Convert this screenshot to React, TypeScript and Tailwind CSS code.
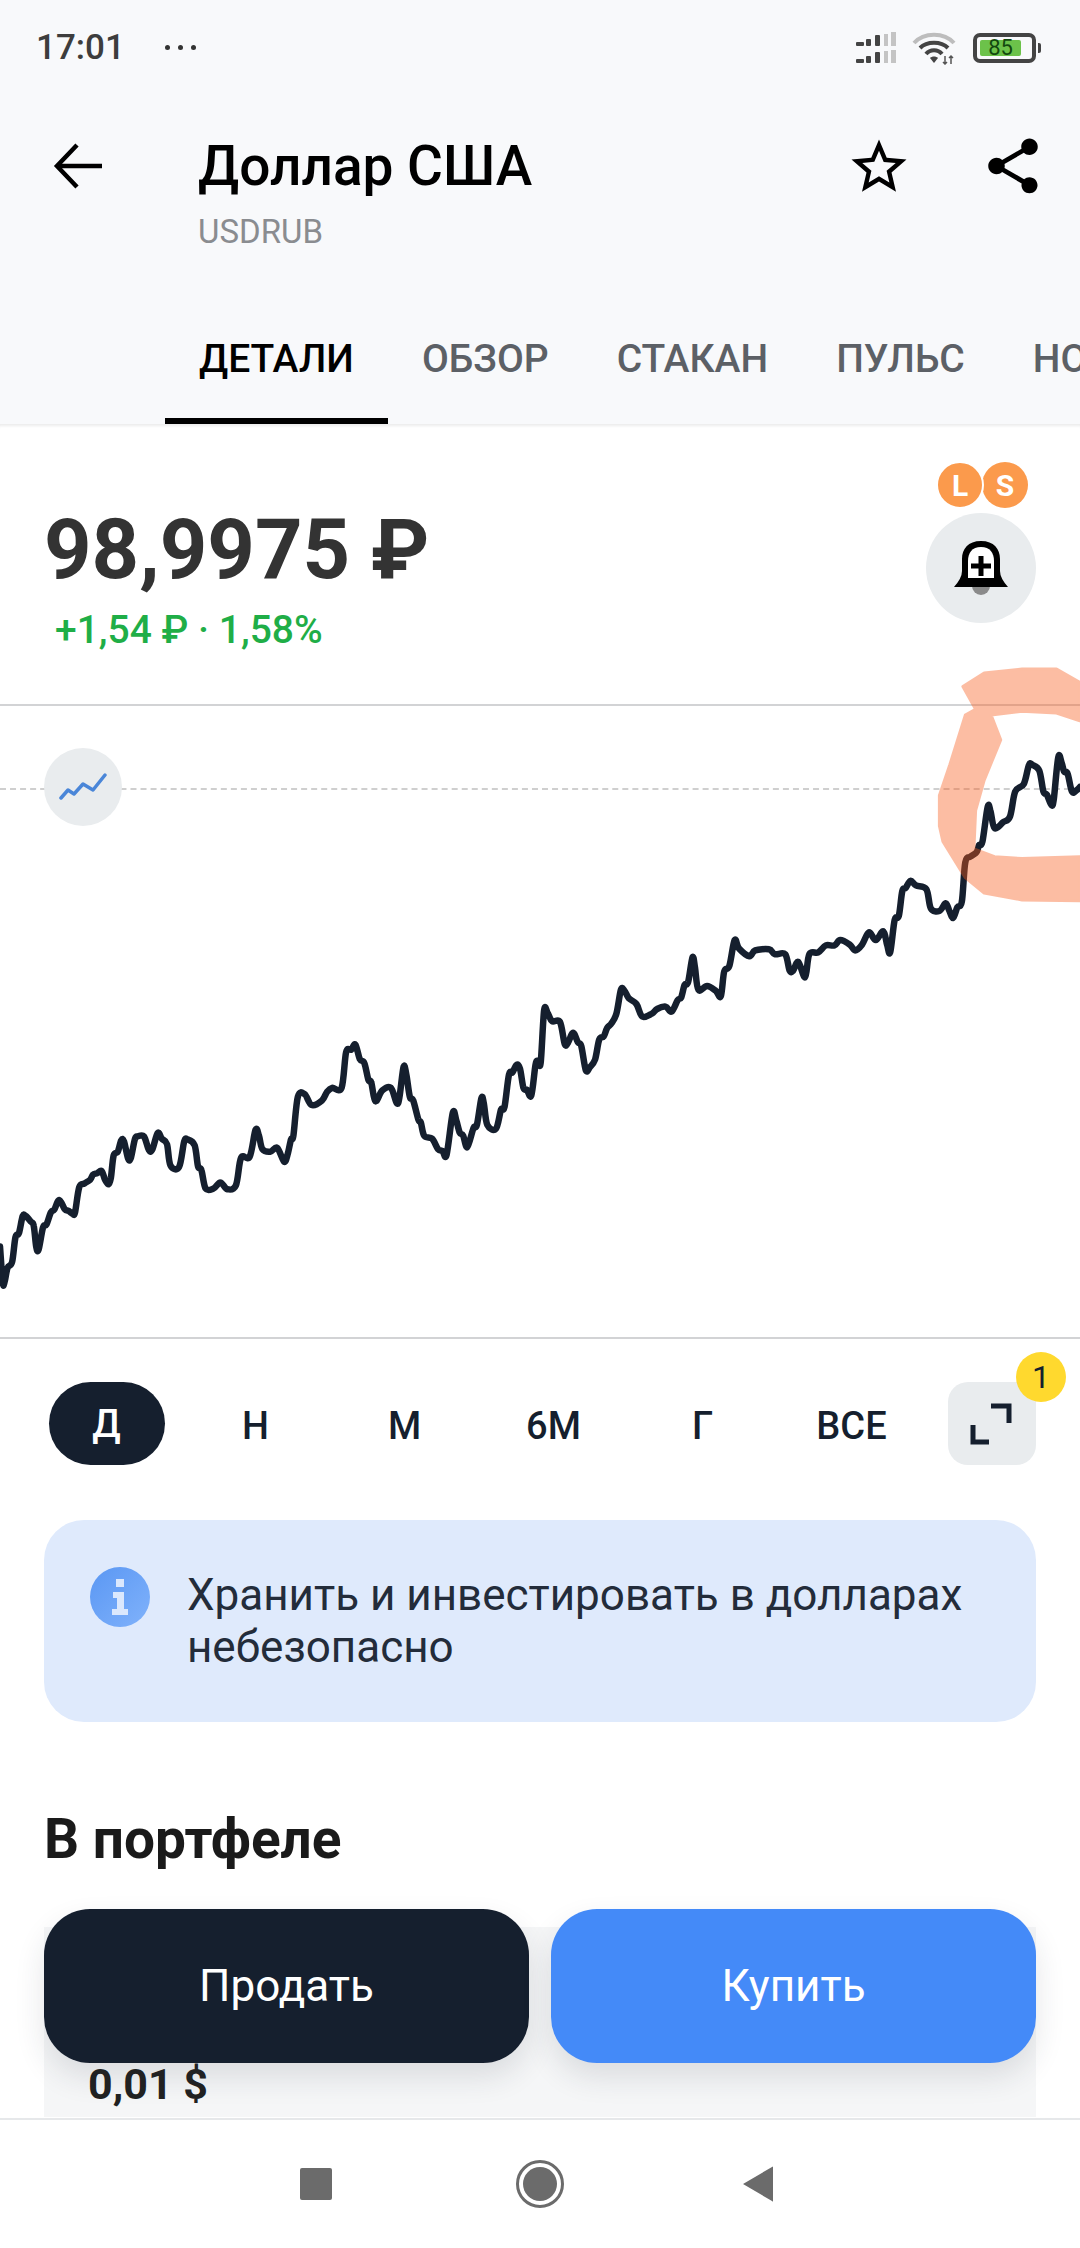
const firstHalf = [
  [0, 1350], [8, 1445], [14, 1440], [22, 1405], [35, 1390], [45, 1325], [55, 1315], [66, 1270], [75, 1270], [90, 1285], [98, 1295], [105, 1350], [112, 1358], [125, 1300], [135, 1292], [148, 1260], [158, 1253], [172, 1228], [188, 1252], [200, 1257], [212, 1265], [218, 1260], [230, 1195], [245, 1185], [262, 1175], [270, 1162], [282, 1158], [295, 1152], [305, 1175], [315, 1187], [322, 1170], [330, 1112], [342, 1102], [352, 1072], [360, 1075], [372, 1120], [380, 1118], [392, 1068], [400, 1062], [418, 1062], [432, 1097], [442, 1097], [458, 1053], [470, 1068], [485, 1082], [495, 1138], [520, 1142], [535, 1075], [545, 1070], [565, 1085], [575, 1140], [585, 1150], [597, 1198], [620, 1198], [640, 1182], [660, 1200], [685, 1190], [700, 1118], [725, 1115], [742, 1045], [752, 1060], [762, 1095], [785, 1102], [805, 1092], [825, 1128], [835, 1110], [845, 1070], [852, 1060], [865, 958], [885, 952], [905, 980], [935, 968], [950, 945], [965, 935], [992, 935], [1005, 842], [1020, 835], [1032, 822], [1045, 860], [1058, 870], [1070, 915], [1078, 920], [1090, 970], [1110, 942], [1135, 935], [1152, 975], [1160, 960], [1172, 880], [1180, 900], [1190, 958], [1200, 968], [1215, 1018], [1222, 1025], [1232, 1060], [1255, 1068], [1272, 1095], [1285, 1100], [1297, 1110], [1315, 1000], [1325, 1020], [1335, 1052], [1345, 1060], [1357, 1090], [1375, 1040], [1385, 1032], [1398, 962], [1405, 975], [1415, 1032], [1440, 1042], [1455, 992], [1465, 985], [1478, 900], [1488, 895], [1500, 875], [1510, 885], [1520, 935], [1530, 940], [1543, 955], [1555, 875], [1562, 865],
].map(([x, y]) => [x / 2.904, y / 2.613 + 730])

const fromRightCrop = ([x, y]: number[]) => [x / 2.904 + 540, y / 2.613 + 650]

const secondHalf = [
  [2, 1078], [12, 942], [22, 948], [35, 970], [58, 972], [72, 1030], [82, 1025], [96, 1000], [110, 1025], [120, 1035], [133, 1098], [145, 1090], [160, 1070], [172, 1018], [185, 1010], [195, 988], [208, 975], [222, 950], [235, 888], [245, 890], [258, 910], [280, 925], [297, 958], [325, 950], [340, 938], [365, 932], [382, 945], [400, 915], [410, 908], [420, 875], [430, 868], [443, 803], [450, 830], [460, 888], [485, 878], [510, 890], [525, 905], [535, 840], [550, 825], [565, 758], [578, 780], [608, 800], [625, 785], [665, 782], [682, 795], [712, 795], [725, 838], [735, 838], [750, 815], [770, 855], [782, 795], [808, 790], [830, 772], [855, 772], [872, 758], [900, 770], [915, 785], [935, 770], [955, 738], [975, 758], [997, 735], [1008, 770], [1017, 790], [1030, 705], [1042, 695], [1052, 630], [1062, 622], [1076, 603], [1092, 615], [1122, 625], [1135, 675], [1160, 682], [1178, 662], [1188, 680], [1200, 700], [1212, 672], [1225, 658], [1235, 555], [1250, 540], [1268, 528], [1275, 510], [1285, 500], [1300, 410], [1308, 420], [1320, 465], [1345, 450], [1365, 435], [1380, 370], [1405, 350], [1420, 300], [1430, 300], [1450, 315], [1462, 370], [1472, 378], [1485, 405], [1492, 390], [1505, 280], [1515, 295], [1522, 318], [1532, 322], [1545, 370], [1560, 365], [1568, 358],
].map(fromRightCrop)

const chartPoints = [...firstHalf, ...secondHalf]

// outline of the hand drawn marker over the chart
const markerPoints = [
  [1228, 95], [1290, 60], [1400, 50], [1500, 50], [1568, 85], [1568, 185], [1500, 165], [1400, 160], [1310, 170], [1338, 235], [1290, 340], [1265, 420], [1260, 520], [1320, 540], [1400, 545], [1568, 540], [1568, 655], [1400, 653], [1290, 635], [1235, 595], [1170, 500], [1160, 460], [1160, 380], [1190, 300], [1235, 170], [1265, 155],
]
  .map(fromRightCrop)
  .map(([x, y]) => `${x.toFixed(1)},${y.toFixed(1)}`)
  .join(" ")

// catmull-rom through the points so the line keeps its soft peaks
const smoothPath = (pts: number[][]) => {
  let d = `M${pts[0][0].toFixed(1)} ${pts[0][1].toFixed(1)}`
  for (let i = 0; i < pts.length - 1; i++) {
    const p0 = pts[i - 1] || pts[i]
    const p1 = pts[i]
    const p2 = pts[i + 1]
    const p3 = pts[i + 2] || p2
    const c1x = p1[0] + (p2[0] - p0[0]) / 6
    const c1y = p1[1] + (p2[1] - p0[1]) / 6
    const c2x = p2[0] - (p3[0] - p1[0]) / 6
    const c2y = p2[1] - (p3[1] - p1[1]) / 6
    d += `C${c1x.toFixed(1)} ${c1y.toFixed(1)} ${c2x.toFixed(1)} ${c2y.toFixed(1)} ${p2[0].toFixed(1)} ${p2[1].toFixed(1)}`
  }
  return d
}

const tabs = ["ДЕТАЛИ", "ОБЗОР", "СТАКАН", "ПУЛЬС", "НОВОСТИ"]
const periods = ["Д", "Н", "М", "6М", "Г", "ВСЕ"]

const StatusBar = () => {
  return (
    <div className="flex h-[94px] items-center justify-between pl-[36px] pr-[39px] pt-[1px]">
      <div className="flex items-center">
        <span className="text-[35px] font-medium leading-none text-[#3d3d3d]">17:01</span>
        <div className="ml-[40px] flex gap-[8px]">
          <div className="h-[5px] w-[5px] rounded-full bg-[#333]"></div>
          <div className="h-[5px] w-[5px] rounded-full bg-[#333]"></div>
          <div className="h-[5px] w-[5px] rounded-full bg-[#333]"></div>
        </div>
      </div>
      <div className="flex items-center gap-[15px]">
        <svg width="42" height="32" viewBox="0 0 42 32">
          <g fill="#444">
            <rect x="1" y="10" width="8" height="4" rx="1" />
            <rect x="11" y="7" width="5" height="7" rx="1" />
            <rect x="20" y="3" width="5" height="11" rx="1" />
            <rect x="1" y="27" width="8" height="4" rx="1" />
            <rect x="11" y="24" width="5" height="7" rx="1" />
            <rect x="20" y="20" width="5" height="11" rx="1" />
          </g>
          <g fill="#c4c4c4">
            <rect x="29" y="2" width="4" height="12" />
            <rect x="36" y="0" width="5" height="14" />
            <rect x="29" y="19" width="4" height="12" />
            <rect x="36" y="18" width="5" height="13" />
          </g>
        </svg>
        <svg width="46" height="34" viewBox="0 0 46 34" fill="none">
          <path d="M2 12 C12 1 32 1 42 12" stroke="#bdbdbd" strokeWidth="4" />
          <path d="M8 17 C15 10 29 10 36 17" stroke="#444" strokeWidth="4" />
          <path d="M14 23 C18 18 26 18 30 23" stroke="#444" strokeWidth="4" />
          <path d="M18 27 L22 32 L26 27 C24 25 20 25 18 27Z" fill="#444" />
          <path d="M33 25 V33 M39 33 V25 M31 31 L33 33 L35 31 M37 27 L39 25 L41 27" stroke="#555" strokeWidth="1.5" />
        </svg>
        <div className="flex items-center gap-[2px]">
          <div className="flex h-[30px] w-[63px] items-center rounded-[7px] border-[4px] border-[#444] px-[3px]">
            <div className="flex h-[16px] w-[41px] items-center justify-center rounded-[2px] bg-[#6cc24a] text-[22px] leading-none text-[#12490f]">
              85
            </div>
          </div>
          <div className="h-[10px] w-[3px] rounded-r-[2px] bg-[#444]"></div>
        </div>
      </div>
    </div>
  )
}

const Header = () => {
  return (
    <div className="h-[424px] shrink-0 overflow-hidden bg-[#f8f9fb]">
      <StatusBar />
      <div className="flex h-[166px] items-start pt-[36px]">
        <div className="flex h-[72px] w-[198px] items-center pl-[52px]">
          <svg width="52" height="46" viewBox="0 0 52 46" fill="none" stroke="#000" strokeWidth="4.5">
            <path d="M50 23 H6" />
            <path d="M25 2 L5 23 L25 44" />
          </svg>
        </div>
        <div className="flex-1">
          <p className="h-[72px] text-[55px] font-medium leading-[72px] text-black">Доллар США</p>
          <p className="mt-[12px] text-[33px] leading-[36px] text-[#8a8c90]">USDRUB</p>
        </div>
        <div className="flex items-start pr-[34px] pt-[3px]">
          <svg width="66" height="66" viewBox="0 0 24 24" fill="#000" className="mr-[68px] mt-[1px]">
            <path d="M22 9.24l-7.19-.62L12 2 9.19 8.63 2 9.24l5.46 4.73L5.82 21 12 17.27 18.18 21l-1.63-7.03L22 9.24zM12 15.4l-3.76 2.27 1-4.28-3.32-2.88 4.38-.38L12 6.1l1.71 4.04 4.38.38-3.32 2.88 1 4.28L12 15.4z" />
          </svg>
          <svg width="66" height="66" viewBox="0 0 24 24" fill="#000">
            <path d="M18 16.08c-.76 0-1.44.3-1.96.77L8.91 12.7c.05-.23.09-.46.09-.7s-.04-.47-.09-.7l7.05-4.11c.54.5 1.25.81 2.04.81 1.66 0 3-1.34 3-3s-1.34-3-3-3-3 1.34-3 3c0 .24.04.47.09.7L8.04 9.81C7.5 9.31 6.79 9 6 9c-1.66 0-3 1.34-3 3s1.34 3 3 3c.79 0 1.5-.31 2.04-.81l7.12 4.16c-.05.21-.08.43-.08.65 0 1.61 1.31 2.92 2.92 2.92 1.61 0 2.92-1.31 2.92-2.92s-1.31-2.92-2.92-2.92z" />
          </svg>
        </div>
      </div>
      <div className="flex h-[164px] items-end overflow-hidden pl-[165px]">
        {tabs.map((tab, i) => (
          <div
            key={tab}
            className={
              i === 0
                ? "flex h-[130px] shrink-0 items-center border-b-[6px] border-black px-[34px] pt-[6px] text-[39px] font-medium text-black"
                : "flex h-[130px] shrink-0 items-center border-b-[6px] border-transparent px-[34px] pt-[6px] text-[39px] font-medium text-[#5c6066]"
            }
          >
            {tab}
          </div>
        ))}
      </div>
    </div>
  )
}

const PriceBlock = () => {
  return (
    <div className="flex h-[280px] shrink-0 items-start justify-between bg-white pl-[44px] pr-[44px] shadow-[inset_0_4px_3px_-2px_rgba(0,0,0,0.08)]">
      <div className="pt-[69px]">
        <p className="text-[83px] font-bold leading-[114px] text-[#333333]">98,9975 ₽</p>
        <p className="ml-[11px] mt-[1px] text-[39px] font-medium leading-[44px] text-[#1fae47]">+1,54 ₽ · 1,58%</p>
      </div>
      <div className="flex flex-col items-center pt-[37px]">
        <div className="flex items-center pl-[2px]">
          <div className="z-10 flex h-[48px] w-[48px] items-center justify-center rounded-full border-[2px] border-white bg-[#fb9a4c] text-[30px] font-bold text-white">
            L
          </div>
          <div className="-ml-[2px] flex h-[46px] w-[46px] items-center justify-center rounded-full bg-[#fb9a4c] text-[30px] font-bold text-white">
            S
          </div>
        </div>
        <div className="mt-[4px] flex h-[110px] w-[110px] items-center justify-center rounded-full bg-[#e9ecee]">
          <svg width="54" height="55" viewBox="0 0 54 55">
            <path d="M18 45 A9 9 0 0 0 36 45Z" fill="#8a8a8a" />
            <path d="M27 0 C14 0 8 8 8 18 V30 Q8 37 0 46 H54 Q46 37 46 30 V18 C46 8 40 0 27 0Z" fill="#000" />
            <path d="M27 6 C18 6 14 12 14 20 V37 H40 V20 C40 12 36 6 27 6Z" fill="#fff" />
            <path d="M24.5 15 H29.5 V22.5 H37 V27.5 H29.5 V35 H24.5 V27.5 H17 V22.5 H24.5Z" fill="#000" />
          </svg>
        </div>
      </div>
    </div>
  )
}

const Chart = () => {
  return (
    <div className="relative z-10 h-[635px] shrink-0 border-y-[2px] border-[#d2d3d5] bg-white">
      <div className="mt-[82px] border-t-[2px] border-dashed border-[#cfcfcf]"></div>
      <svg
        width="1080"
        height="633"
        viewBox="0 704 1080 633"
        fill="none"
        className="absolute left-0 top-[-2px] overflow-visible"
      >
        <path d={smoothPath(chartPoints)} stroke="#151f2e" strokeWidth="6.5" strokeLinejoin="round" strokeLinecap="round" />
        <polygon points={markerPoints} fill="#fa5c1b" stroke="#fa5c1b" strokeWidth="3" strokeLinejoin="round" opacity="0.4" />
      </svg>
      <div className="absolute left-[44px] top-[42px] flex h-[78px] w-[78px] items-center justify-center rounded-full bg-[#e9ecee]">
        <svg width="48" height="28" viewBox="0 0 48 28" fill="none" stroke="#4a86d8" strokeWidth="3.5" strokeLinecap="round" strokeLinejoin="round">
          <path d="M2 25 L9 17 L15 21 L24 11 L34 17 L46 2" />
        </svg>
      </div>
    </div>
  )
}

const PeriodRow = () => {
  return (
    <div className="flex h-[181px] shrink-0 items-start pl-[32px] pr-[44px] pt-[43px]">
      {periods.map((p, i) => (
        <div key={p} className="flex h-[83px] w-[149px] items-center justify-center">
          <div
            className={
              i === 0
                ? "flex h-[83px] w-[116px] items-center justify-center rounded-[42px] bg-[#151f2e] pt-[2px] text-[38px] font-medium text-white"
                : "pt-[6px] text-[38px] font-medium text-[#151f2e]"
            }
          >
            {p}
          </div>
        </div>
      ))}
      <div className="relative ml-[22px] flex h-[83px] w-[88px] shrink-0 items-center justify-center rounded-[20px] bg-[#e9ecee]">
        <svg width="44" height="44" viewBox="0 0 44 44" fill="none" stroke="#151f2e" strokeWidth="5">
          <path d="M21 4 H39 V21" />
          <path d="M3 23 V40 H19" />
        </svg>
        <div className="absolute -right-[30px] -top-[30px] flex h-[50px] w-[50px] items-center justify-center rounded-full bg-[#ffd92e] text-[32px] text-[#151f2e]">
          1
        </div>
      </div>
    </div>
  )
}

const InfoBox = () => {
  return (
    <div className="mx-[44px] flex h-[202px] shrink-0 items-start rounded-[40px] bg-[#dfeafc] pl-[46px] pt-[47px]">
      <div className="flex h-[60px] w-[60px] shrink-0 items-center justify-center rounded-full bg-gradient-to-br from-[#5a97f3] to-[#80b2fb]">
        <svg width="20" height="36" viewBox="0 0 20 36" fill="#dbe8fd">
          <rect x="6" y="0" width="8" height="8" />
          <path d="M3 13 H14 V30 H18 V36 H2 V30 H7 V19 H3Z" />
        </svg>
      </div>
      <p className="ml-[37px] pt-[2px] text-[44px] leading-[52px] text-[#232c3a]">
        Хранить и инвестировать в долларах
        <br />
        небезопасно
      </p>
    </div>
  )
}

const NavBar = () => {
  return (
    <div className="absolute bottom-0 left-0 flex h-[130px] w-full items-center justify-center border-t-[2px] border-[#e6e8ea] bg-white">
      <div className="flex items-center gap-[184px]">
        <div className="h-[32px] w-[32px] rounded-[2px] bg-[#6b6b6b]"></div>
        <div className="flex h-[48px] w-[48px] items-center justify-center rounded-full border-[3px] border-[#6b6b6b]">
          <div className="h-[34px] w-[34px] rounded-full bg-[#6b6b6b]"></div>
        </div>
        <svg width="32" height="36" viewBox="0 0 32 36" className="-ml-[6px] mr-[6px]">
          <path d="M31 1 V35 Q31 36 30 35 L1 18 L30 1 Q31 0 31 1Z" fill="#6b6b6b" />
        </svg>
      </div>
    </div>
  )
}

const App = () => {
  return (
    <div className="relative flex h-[2248px] w-[1080px] flex-col overflow-hidden bg-white font-['Roboto',sans-serif]">
      <Header />
      <PriceBlock />
      <Chart />
      <PeriodRow />
      <InfoBox />
      <p className="ml-[44px] mt-[85px] text-[55px] font-bold leading-[64px] text-[#1a1a1a]">В портфеле</p>
      <div className="mx-[44px] mt-[56px] flex h-[190px] shrink-0 items-end bg-[#f5f6f7] pb-[10px] pl-[44px]">
        <p className="text-[43px] font-bold leading-[46px] text-[#222]">0,01 $</p>
      </div>

      <div className="absolute left-[44px] top-[1909px] flex w-[992px] gap-[22px]">
        <button className="h-[154px] flex-1 rounded-[46px] bg-[#151f2e] text-[44px] text-white shadow-[0_14px_30px_rgba(30,40,60,0.12)]">
          Продать
        </button>
        <button className="h-[154px] flex-1 rounded-[46px] bg-[#448af8] text-[44px] text-white shadow-[0_14px_30px_rgba(30,40,60,0.12)]">
          Купить
        </button>
      </div>
      <NavBar />
    </div>
  )
}

export default App
